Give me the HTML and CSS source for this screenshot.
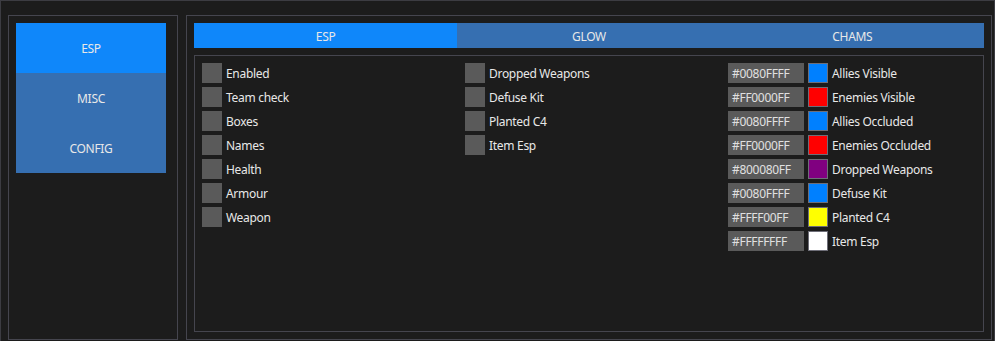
FILE: index.html
```html
<!DOCTYPE html>
<html>
<head>
<meta charset="utf-8">
<link rel="stylesheet" href="styles.css">
</head>
<body>
<div class="window">
  <div class="sidebar">
    <div class="nav-btn active">ESP</div>
    <div class="nav-btn">MISC</div>
    <div class="nav-btn">CONFIG</div>
  </div>
  <div class="main">
    <div class="tabs">
      <div class="tab active">ESP</div>
      <div class="tab">GLOW</div>
      <div class="tab">CHAMS</div>
    </div>
    <div class="content">
      <div class="col">
        <div class="row"><span class="box"></span><span class="label">Enabled</span></div>
        <div class="row"><span class="box"></span><span class="label">Team check</span></div>
        <div class="row"><span class="box"></span><span class="label">Boxes</span></div>
        <div class="row"><span class="box"></span><span class="label">Names</span></div>
        <div class="row"><span class="box"></span><span class="label">Health</span></div>
        <div class="row"><span class="box"></span><span class="label">Armour</span></div>
        <div class="row"><span class="box"></span><span class="label">Weapon</span></div>
      </div>
      <div class="col">
        <div class="row"><span class="box"></span><span class="label">Dropped Weapons</span></div>
        <div class="row"><span class="box"></span><span class="label">Defuse Kit</span></div>
        <div class="row"><span class="box"></span><span class="label">Planted C4</span></div>
        <div class="row"><span class="box"></span><span class="label">Item Esp</span></div>
      </div>
      <div class="col">
        <div class="row"><span class="hex">#0080FFFF</span><span class="swatch" style="background:#0080ff"></span><span class="label">Allies Visible</span></div>
        <div class="row"><span class="hex">#FF0000FF</span><span class="swatch" style="background:#ff0000"></span><span class="label">Enemies Visible</span></div>
        <div class="row"><span class="hex">#0080FFFF</span><span class="swatch" style="background:#0080ff"></span><span class="label">Allies Occluded</span></div>
        <div class="row"><span class="hex">#FF0000FF</span><span class="swatch" style="background:#ff0000"></span><span class="label">Enemies Occluded</span></div>
        <div class="row"><span class="hex">#800080FF</span><span class="swatch" style="background:#800080"></span><span class="label">Dropped Weapons</span></div>
        <div class="row"><span class="hex">#0080FFFF</span><span class="swatch" style="background:#0080ff"></span><span class="label">Defuse Kit</span></div>
        <div class="row"><span class="hex">#FFFF00FF</span><span class="swatch" style="background:#ffff00"></span><span class="label">Planted C4</span></div>
        <div class="row"><span class="hex">#FFFFFFFF</span><span class="swatch" style="background:#ffffff"></span><span class="label">Item Esp</span></div>
      </div>
    </div>
  </div>
</div>
</body>
</html>
```
FILE: styles.css
```css
html, body {
  margin: 0;
  padding: 0;
  background: #1c1c1c;
  overflow: hidden;
}
body {
  font-family: "Noto Sans", "Open Sans", sans-serif;
  font-size: 12px;
  letter-spacing: -0.3px;
  color: #e8e8e8;
}
.window {
  box-sizing: border-box;
  width: 995px;
  height: 345px;
  border: 1px solid #3c3c42;
  background: #1c1c1c;
  padding: 14px 2px 0 7px;
  display: flex;
  gap: 8px;
  align-items: flex-start;
}
.sidebar {
  box-sizing: border-box;
  width: 170px;
  height: 325px;
  border: 1px solid #45454e;
  padding: 7px;
  display: flex;
  flex-direction: column;
}
.nav-btn {
  width: 150px;
  height: 50px;
  padding-top: 1px;
  box-sizing: border-box;
  background: #366fb1;
  display: flex;
  align-items: center;
  justify-content: center;
}
.nav-btn.active {
  background: #0f87fa;
}
.main {
  box-sizing: border-box;
  width: 806px;
  height: 325px;
  border: 1px solid #45454e;
  padding: 7px;
  display: flex;
  flex-direction: column;
  gap: 7px;
}
.tabs {
  display: flex;
  height: 25px;
  width: 790px;
}
.tab {
  flex: 1;
  background: #366fb1;
  display: flex;
  align-items: center;
  justify-content: center;
  padding-top: 1px;
}
.tab.active {
  background: #0f87fa;
}
.content {
  box-sizing: border-box;
  width: 790px;
  height: 277px;
  border: 1px solid #45454e;
  padding: 7px;
  display: flex;
}
.col {
  flex: 0 0 263px;
  display: flex;
  flex-direction: column;
  gap: 4px;
}
.row {
  display: flex;
  align-items: center;
  height: 20px;
  gap: 4px;
}
.box {
  width: 20px;
  height: 20px;
  background: #5a5a5a;
}
.label {
  white-space: nowrap;
  line-height: 20px;
  margin-top: 2px;
}
.hex {
  box-sizing: border-box;
  width: 76px;
  height: 20px;
  background: #5a5a5a;
  padding: 1px 0 0 4px;
  line-height: 20px;
  color: #e0e0e0;
}
.swatch {
  box-sizing: border-box;
  width: 20px;
  height: 20px;
  border: 1px solid #6e6e78;
}
```
